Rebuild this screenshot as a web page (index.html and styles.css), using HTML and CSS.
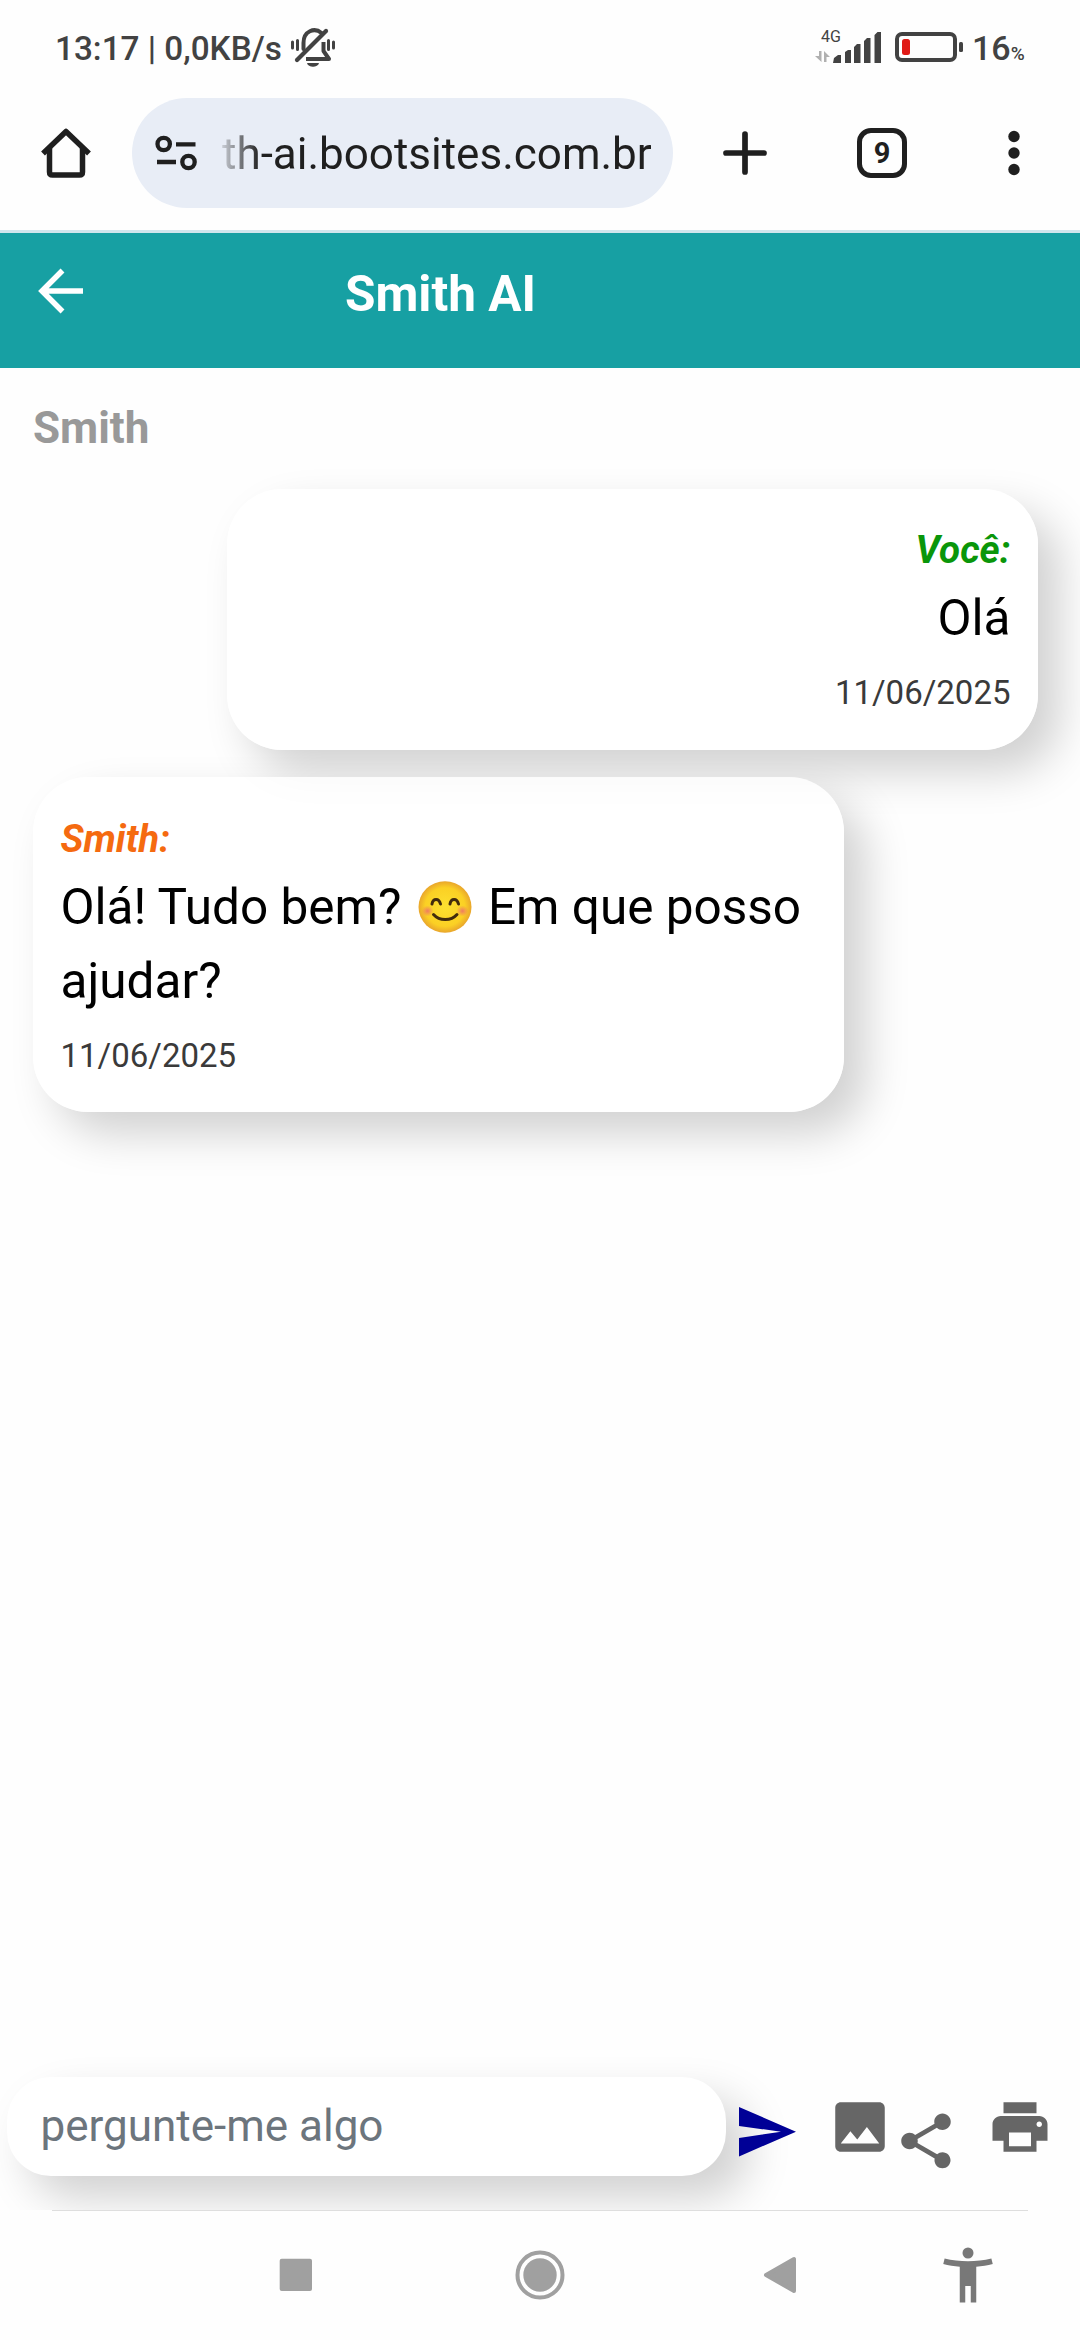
FILE: index.html
```html
<!DOCTYPE html>
<html lang="pt-BR">
<head>
<meta charset="utf-8">
<title>Smith AI</title>
<link rel="stylesheet" href="styles.css">
</head>
<body>
<div class="status">
  <span class="clock">13:17 | 0,0KB/s</span>
  <svg class="bell" width="46" height="40" viewBox="290 28 46 40" fill="none" stroke="#424242" stroke-width="4" stroke-linecap="round">
    <path d="M292.500 42v6M297.500 40.500v9M328.500 40.500v9M333.500 42v6" stroke-width="3"/>
    <path d="M303.500 49V43c0-12 11-16 18-10"/>
    <path d="M297 60 326 31" stroke-width="4.200"/>
    <path d="M306 59h23l-5.500-8V42" stroke-linecap="butt" stroke-linejoin="round"/>
    <path d="M307 63h12c-1 5-11 5-12 0z" fill="#424242" stroke="none"/>
  </svg>
  <div class="network">
    <span class="net-type">4G</span>
    <svg width="70" height="34" viewBox="814 30 70 34" fill="#424242">
      <path d="M819 51h2.500v11l-6.500-6h4zM824 62V51l6 6h-3.500v5z" fill="#b0b0b0"/>
      <path d="M834 58l4-3h3v8h-8zM845 52l3-2h3v13h-6zM854 47l3-3h3.500v19H854zM864 41l3-3h3.500v25H864zM874.500 35l3-3h3.500v31h-6.500z"/>
    </svg>
  </div>
  <svg class="battery" width="70" height="32" viewBox="894 31 70 32">
    <rect x="897" y="34" width="58" height="26" rx="5" fill="none" stroke="#424242" stroke-width="4"/>
    <rect x="902" y="39" width="8" height="16" rx="2.500" fill="#e01a16"/>
    <rect x="959" y="42" width="4" height="10" rx="1.500" fill="#424242"/>
  </svg>
  <span class="level">16<small>%</small></span>
</div>
<div class="browser">
  <svg class="home" width="52" height="52" viewBox="40 127 52 52" fill="none" stroke="#1f1f1f" stroke-width="5.500">
    <path d="M43 153.500 66 131.500 89 153.500" stroke-linejoin="round"/>
    <path d="M49.500 148v24q0 3 3 3h27q3 0 3-3V148"/>
  </svg>
  <div class="omnibox">
    <svg width="42" height="36" viewBox="155 135 42 36" fill="none" stroke="#1f1f1f" stroke-width="4.300">
      <circle cx="163.700" cy="144" r="6.200"/><path d="M176 144.300h19.500M157 162h19"/><circle cx="188.500" cy="162" r="6.200"/>
    </svg>
    <span class="url">th-ai.bootsites.com.br</span>
  </div>
  <svg class="plus" width="46" height="46" viewBox="0 0 46 46" stroke="#1f1f1f" stroke-width="5.700" stroke-linecap="round"><path d="M23 4v38M4 23h38"/></svg>
  <span class="tabs">9</span>
  <svg class="more" width="12" height="46" viewBox="0 0 12 46" fill="#1f1f1f"><circle cx="6" cy="6.500" r="5.700"/><circle cx="6" cy="23" r="5.700"/><circle cx="6" cy="39.500" r="5.700"/></svg>
</div>
<header class="header">
  <svg class="back" width="46" height="46" viewBox="0 0 46 46" fill="none" stroke="#fff" stroke-width="5.500"><path d="M45 23H4M24.500 2.500 4 23l20.500 20.500"/></svg>
  <h1>Smith AI</h1>
</header>
<main class="chat">
  <h2>Smith</h2>
  <article class="bubble mine">
    <p class="who">Você:</p>
    <p class="text">Olá</p>
    <p class="date">11/06/2025</p>
  </article>
  <article class="bubble bot">
    <p class="who">Smith:</p>
    <p class="text">Olá! Tudo bem? <svg class="emoji" role="img" aria-label="Sorriso" width="54" height="52" viewBox="0 0 54 52">
      <defs>
        <radialGradient id="face"><stop offset="0" stop-color="#fde030"/><stop offset=".75" stop-color="#fbd024"/><stop offset="1" stop-color="#e9a62c"/></radialGradient>
        <radialGradient id="cheek"><stop offset="0" stop-color="#ef7c62"/><stop offset="1" stop-color="#ef7c62" stop-opacity="0"/></radialGradient>
      </defs>
      <ellipse cx="27" cy="26" rx="26.500" ry="25.700" fill="url(#face)"/>
      <ellipse cx="9.500" cy="30" rx="6" ry="5.500" fill="url(#cheek)"/><ellipse cx="44.500" cy="30" rx="6" ry="5.500" fill="url(#cheek)"/>
      <g fill="none" stroke="#422b0d" stroke-linecap="round" stroke-width="3"><path d="M14 23c1-6 7-6 8.500 0M32 23c1-6 7-6 8.500 0"/><path d="M15.500 33.500c6 6.700 17.500 6.700 23.500 0"/></g>
    </svg> Em que posso ajudar?</p>
    <p class="date">11/06/2025</p>
  </article>
  <form class="composer">
    <input class="ask" type="text" placeholder="pergunte-me algo">
    <svg class="send" width="58" height="50" viewBox="0 0 58 50" fill="#000096"><path d="M0 0 57 24.700 0 49.500V31l42-6.300L0 19z"/></svg>
    <svg class="image" width="66" height="66" viewBox="0 0 24 24" fill="#666"><path d="M21 19V5c0-1.100-.9-2-2-2H5c-1.100 0-2 .9-2 2v14c0 1.100.9 2 2 2h14c1.100 0 2-.9 2-2zM8.500 13.500l2.500 3.010L14.500 12l4.500 6H5l3.500-4.500z"/></svg>
    <svg class="share" width="66" height="66" viewBox="0 0 24 24" fill="#666"><path d="M18 16.080c-.76 0-1.440.3-1.960.77L8.910 12.700c.05-.23.09-.46.09-.7s-.04-.47-.09-.7l7.050-4.110c.54.5 1.250.81 2.040.81 1.660 0 3-1.340 3-3s-1.340-3-3-3-3 1.340-3 3c0 .24.040.47.090.7L8.040 9.810C7.500 9.310 6.790 9 6 9c-1.660 0-3 1.340-3 3s1.340 3 3 3c.79 0 1.500-.31 2.040-.81l7.120 4.160c-.05.21-.08.43-.08.65 0 1.610 1.310 2.920 2.920 2.920s2.920-1.310 2.920-2.920-1.310-2.920-2.920-2.920z"/></svg>
    <svg class="print" width="66" height="66" viewBox="0 0 24 24" fill="#666"><path d="M19 8H5c-1.660 0-3 1.340-3 3v6h4v4h12v-4h4v-6c0-1.660-1.340-3-3-3zm-3 11H8v-5h8v5zm3-7c-.55 0-1-.45-1-1s.45-1 1-1 1 .45 1 1-.45 1-1 1zm-1-9H6v4h12V3z"/></svg>
  </form>
</main>
<nav class="system">
  <svg class="recent" width="34" height="34" viewBox="0 0 34 34"><rect x=".7" y=".7" width="32.300" height="32.300" rx="2" fill="#a0a0a0"/></svg>
  <svg class="circle" width="50" height="50" viewBox="0 0 50 50"><circle cx="25" cy="25" r="22.500" fill="none" stroke="#a0a0a0" stroke-width="4"/><circle cx="25" cy="25" r="16.700" fill="#a0a0a0"/></svg>
  <svg class="triangle" width="34" height="38" viewBox="0 0 34 38"><path d="M3 19 31 3v32z" fill="#a0a0a0" stroke="#a0a0a0" stroke-width="4" stroke-linejoin="round"/></svg>
  <svg class="person" width="66" height="66" viewBox="0 0 24 24" fill="#787878"><circle cx="12" cy="4" r="2"/><path d="M20.500 6c-2.610.7-5.670 1-8.500 1s-5.890-.3-8.500-1L3 8c1.860.5 4 .83 6 1v13h2v-6h2v6h2V9c2-.17 4.140-.5 6-1l-.5-2z"/></svg>
</nav>
</body>
</html>
```

FILE: styles.css
```css
* { box-sizing: border-box; margin: 0; padding: 0; }
body { width: 1080px; height: 2340px; display: flex; flex-direction: column; overflow: hidden; background: #fefefe; font-family: Roboto, sans-serif; }
svg { display: block; flex: none; }

.status { height: 90px; display: flex; align-items: flex-start; color: #424242; font-weight: 500; white-space: nowrap; }
.clock { width: 235px; margin: 29px 0 0 55px; font-size: 33.300px; line-height: 40px; }
.bell { margin-top: 28px; }
.network { display: grid; margin: 30px 0 0 478px; }
.network > * { grid-area: 1 / 1; }
.net-type { padding-left: 7px; font-size: 16px; line-height: 14px; font-weight: 400; }
.battery { margin: 31px 0 0 10px; }
.level { margin: 28px 0 0 8px; font-size: 34px; line-height: 40px; }
.level small { font-size: 19px; }

.browser { height: 143px; display: flex; align-items: flex-start; padding: 8px 0 0 40px; border-bottom: 3px solid #d0e6ed; }
.home { margin-top: 29px; }
.omnibox { width: 541px; height: 110px; margin-left: 40px; padding-left: 23px; display: flex; align-items: center; border-radius: 55px; background: #e8edf6; }
.url { margin: 2px 0 0 25px; font-size: 44px; line-height: 52px; white-space: nowrap; color: transparent; background: linear-gradient(90deg, rgba(31,31,31,.15), #1f1f1f 38px); -webkit-background-clip: text; background-clip: text; }
.plus { margin: 32px 0 0 49px; }
.tabs { width: 50px; height: 50px; margin: 30px 0 0 89px; border: 5.500px solid #1f1f1f; border-radius: 14px; text-align: center; font-size: 29px; line-height: 41px; font-weight: 700; color: #1f1f1f; }
.more { margin: 32px 0 0 101px; }

.header { flex: none; height: 135px; display: flex; align-items: flex-start; background: #17a0a3; color: #fff; }
.back { margin: 35px 0 0 38px; }
.header h1 { margin: 24px 0 0 261px; font-size: 49.500px; line-height: 74px; font-weight: 700; }

.chat { flex: none; height: 1842px; display: flex; flex-direction: column; overflow: hidden; }
.chat h2 { margin: 27px 0 28px 33px; font-size: 44px; line-height: 66px; font-weight: 700; color: #999; }
.bubble { width: 811px; padding: 28px 27.500px 32px; border-radius: 55px; background: rgba(255,255,255,.8); box-shadow: 22px 22px 44px rgba(0,0,0,.18); }
.mine { margin-left: 227px; text-align: right; }
.bot { margin: 27px 0 0 33px; padding: 29px 27.500px 31px; }
.who { font-size: 38.500px; line-height: 66px; font-weight: 700; font-style: italic; }
.mine .who { color: #0a960a; }
.bot .who { color: #f56a10; }
.text { margin-top: -2px; font-size: 49.500px; line-height: 74.250px; color: #000; }
.emoji { display: inline-block; margin: 0 4px; vertical-align: -9px; }
.date { margin-top: 13px; font-size: 33px; line-height: 49.500px; color: #3a3a3a; }

.composer { display: flex; align-items: flex-start; height: 133px; margin-top: auto; padding-left: 7px; }
.ask { width: 719px; height: 99px; padding: 0 33.500px 2px; border: 0; border-radius: 44px; background: #fff; font: 44px Roboto, sans-serif; box-shadow: 22px 22px 44px rgba(0,0,0,.18); }
.ask::placeholder { color: #6c757d; opacity: 1; }
.send { position: relative; margin: 30px 0 0 13px; }
.image { margin: 17px 0 0 30px; }
.share { margin-top: 31px; }
.print { margin: 17px 0 0 28px; }

.system { flex: none; position: relative; height: 130px; display: flex; align-items: center; padding-left: 279px; background: #fefefe; }
.system::before { content: ""; position: absolute; top: 0; left: 52px; width: 976px; height: 1px; background: #dedede; }
.circle { margin-left: 202px; }
.triangle { margin-left: 198px; }
.person { margin-left: 138px; }
```
